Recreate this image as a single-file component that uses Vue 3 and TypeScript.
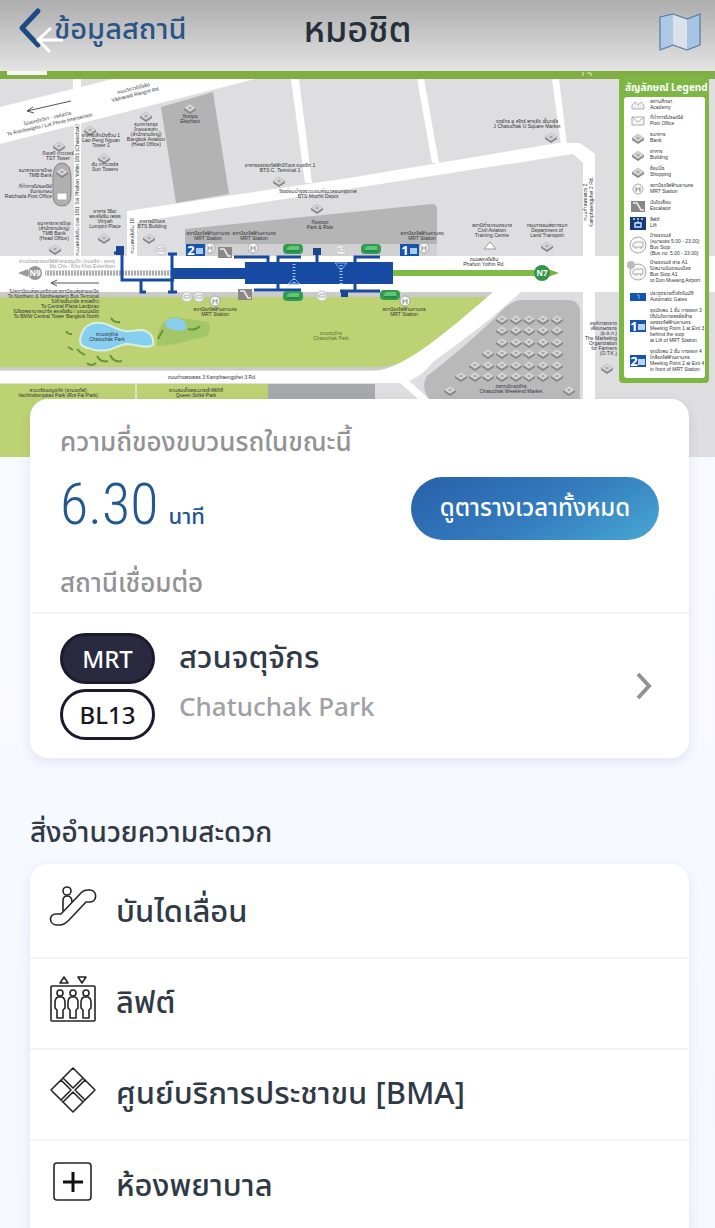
<script setup lang="ts">
interface MapLabel {
  x: number
  y: number
  lines: string[]
  anchor?: 'start' | 'middle' | 'end'
  tone?: string
}

interface Facility {
  id: 'escalator' | 'lift' | 'bma' | 'aid'
  name: string
}

const labels: MapLabel[] = [
  { x: 58, y: 155, lines: ['ทีเอสที ทาวเวอร์', 'TST Tower'] },
  { x: 52, y: 172, lines: ['ธนาคารทหารไทย', 'TMB Bank'], anchor: 'end' },
  { x: 52, y: 188, lines: ['ที่ทำการไปรษณีย์', 'จันทรเกษม', 'Ratchada Post Office'], anchor: 'end' },
  { x: 54, y: 225, lines: ['ธนาคารทหารไทย', '(สำนักงานใหญ่)', 'TMB Bank', '(Head Office)'] },
  { x: 101, y: 137, lines: ['อาคารเล้าเป้งง้วน 1', 'Lao Peng Nguan', 'Tower 1'] },
  { x: 105, y: 166, lines: ['ซัน ทาวเวอร์ส', 'Sun Towers'] },
  { x: 105, y: 213, lines: ['อาคาร วิริยะ', 'พหลโยธิน เพลส', 'Viriyah', 'Lumpini Place'] },
  { x: 152, y: 223, lines: ['อาคารบีทีเอส', 'BTS Building'] },
  { x: 146, y: 126, lines: ['ธนาคารกรุง', 'ไทยแอสเสท', '(สำนักงานใหญ่)', 'Bangkok Aviation', '(Head Office)'] },
  { x: 190, y: 118, lines: ['วัดอรุณ', 'Elephant'] },
  { x: 280, y: 167, lines: ['อาคารจอดรถไฟฟ้าบีทีเอส หมอชิต 1', 'BTS C. Terminal 1'] },
  { x: 318, y: 193, lines: ['โรงซ่อมบำรุงระบบขนส่งมวลชนกรุงเทพ', 'BTS Mochit Depot'] },
  { x: 320, y: 224, lines: ['ที่จอดรถ', 'Park & Ride'] },
  { x: 208, y: 235, lines: ['สถานีรถไฟฟ้ามหานคร', 'MRT Station'] },
  { x: 254, y: 235, lines: ['สถานีรถไฟฟ้ามหานคร', 'MRT Station'] },
  { x: 422, y: 235, lines: ['สถานีรถไฟฟ้ามหานคร', 'MRT Station'] },
  { x: 492, y: 227, lines: ['สถานีตำรวจนครบาล', 'Civil Aviation', 'Training Centre'] },
  { x: 547, y: 227, lines: ['กรมการขนส่งทางบก', 'Department of', 'Land Transport'] },
  { x: 527, y: 123, lines: ['จตุจักร ยู สโตร์ พาหุรัด เซ็นทรัล', 'J Chatuchak U Square Market'] },
  { x: 484, y: 261, lines: ['ถนนพหลโยธิน', 'Phahon Yothin Rd.'] },
  { x: 115, y: 263, lines: ['ส่วนต่อขยายรถไฟฟ้าสายสุขุมวิท (หมอชิต - คูคต)', 'Mo Chit - Khu Khot Extension'], anchor: 'end', tone: '#98989c' },
  {
    x: 99,
    y: 293,
    lines: [
      'ไปสถานีขนส่งหมอชิตและสถานีขนส่งสายเหนือ',
      'To Northern & Northeastern Bus Terminal',
      'ไปห้างเซ็นทรัล ลาดพร้าว',
      'To Central Plaza Lardprao',
      'ไปโรงพยาบาลเปาโล พหลโยธิน / แดนเนรมิต',
      'To BMW Central Tower Bangkok North',
    ],
    anchor: 'end',
  },
  { x: 215, y: 311, lines: ['สถานีรถไฟฟ้ามหานคร', 'MRT Station'] },
  { x: 404, y: 311, lines: ['สถานีรถไฟฟ้ามหานคร', 'MRT Station'] },
  { x: 107, y: 336, lines: ['สวนจตุจักร', 'Chatuchak Park'] },
  { x: 331, y: 335, lines: ['สวนจตุจักร', 'Chatuchak Park'], tone: '#637232' },
  { x: 212, y: 379, lines: ['ถนนกำแพงเพชร 3 Kamphaengphet 3 Rd.'] },
  { x: 58, y: 392, lines: ['สวนวชิรเบญจทัศ (สวนรถไฟ)', 'Vachirabenjatas Park (Rot Fai Park)'] },
  { x: 196, y: 392, lines: ['สวนสมเด็จพระนางเจ้าสิริกิติ์', 'Queen Sirikit Park'] },
  { x: 511, y: 388, lines: ['ตลาดนัดจตุจักร', 'Chatuchak Weekend Market'] },
  {
    x: 617,
    y: 325,
    lines: ['องค์การตลาด', 'เพื่อเกษตรกร', '(อ.ต.ก.)', 'The Marketing', 'Organization', 'for Farmers', '(O.T.K.)'],
    anchor: 'end',
  },
]

const pins: [number, number][] = [
  [59, 146], [90, 130], [104, 158], [146, 116], [190, 108], [279, 181], [317, 208],
  [551, 137], [104, 238], [149, 238], [55, 249], [547, 246], [607, 368], [450, 390], [569, 390],
]

const marketRows: { y: number; xs: number[] }[] = [
  { y: 319, xs: [502, 516, 529, 543, 557] },
  { y: 330, xs: [502, 516, 529, 543, 557] },
  { y: 342, xs: [502, 516, 529, 543, 557] },
  { y: 353, xs: [488, 502, 516, 529, 543, 557] },
  { y: 365, xs: [475, 488, 502, 516, 529, 543, 557] },
  { y: 376, xs: [461, 475, 488, 502, 516, 529, 543, 557] },
]

const stops: [number, number][] = [[161, 250], [341, 250], [187, 297], [199, 297], [322, 296]]
const metro: [number, number][] = [[210, 248], [253, 248], [215, 301], [424, 248], [405, 301]]
const exits: [number, number][] = [[293, 244], [293, 291], [371, 244], [390, 290]]

const legend: { y: number; kind: string; lines: string[] }[] = [
  { y: 105, kind: 'school', lines: ['สถานศึกษา', 'Academy'] },
  { y: 121, kind: 'post', lines: ['ที่ทำการไปรษณีย์', 'Post Office'] },
  { y: 138, kind: 'pin', lines: ['ธนาคาร', 'Bank'] },
  { y: 155, kind: 'pin', lines: ['อาคาร', 'Building'] },
  { y: 172, kind: 'pin', lines: ['ช้อปปิ้ง', 'Shopping'] },
  { y: 189, kind: 'metro', lines: ['สถานีรถไฟฟ้ามหานคร', 'MRT Station'] },
  { y: 206, kind: 'escalator', lines: ['บันไดเลื่อน', 'Escalator'] },
  { y: 223, kind: 'lift', lines: ['ลิฟต์', 'Lift'] },
  { y: 245, kind: 'bus', lines: ['ป้ายรถเมล์', '(หมายเลข 5.00 - 23.00)', 'Bus Stop', '(Bus no. 5.00 - 23.00)'] },
  { y: 272, kind: 'bus', lines: ['ป้ายรถเมล์ สาย A1', 'ไปสนามบินดอนเมือง', 'Bus Stop A1', 'to Don Mueang Airport'] },
  { y: 297, kind: 'ticket', lines: ['ประตูตรวจตั๋วอัตโนมัติ', 'Automatic Gates'] },
  { y: 326, kind: '1', lines: ['จุดนัดพบ 1 ชั้น ทางออก 3', 'ใต้บันไดทางลงฝั่งซ้าย', 'ของรถไฟฟ้ามหานคร', 'Meeting Point 1 at Exit 3', 'behind the stop', 'at Lift of MRT Station'] },
  { y: 361, kind: '2', lines: ['จุดนัดพบ 2 ชั้น ทางออก 4', 'ใกล้รถไฟฟ้ามหานคร', 'Meeting Point 2 at Exit 4', 'in front of MRT Station'] },
]

const facilities: Facility[] = [
  { id: 'escalator', name: 'บันไดเลื่อน' },
  { id: 'lift', name: 'ลิฟต์' },
  { id: 'bma', name: 'ศูนย์บริการประชาขน [BMA]' },
  { id: 'aid', name: 'ห้องพยาบาล' },
]
</script>

<template>
  <div class="page">
    <header class="bar">
      <button class="back" type="button">
        <svg class="back-icon" viewBox="0 0 28 42" aria-hidden="true">
          <path d="M24 4 8 21 24 38" fill="none" stroke="#1c4a83" stroke-width="5" stroke-linecap="round" stroke-linejoin="round" />
        </svg>
        <span>ข้อมูลสถานี</span>
      </button>
      <button class="viewer-back" type="button" aria-label="ย้อนกลับ">
        <svg viewBox="0 0 28 28" aria-hidden="true">
          <path d="M15 2 2 14 14 26M3 14H27" fill="none" stroke="#fff" stroke-width="3" />
        </svg>
      </button>
      <h1>หมอชิต</h1>
      <button class="map-button" type="button" aria-label="แผนที่">
        <svg viewBox="0 0 42 38" aria-hidden="true">
          <path d="M1 4 14 1V32L1 37Z" fill="#adc9e6" />
          <path d="M14 1 28 6V37L14 32Z" fill="#dbe1e8" />
          <path d="M28 6 41 1V32L28 37Z" fill="#a6c4e3" />
          <path d="M1 4 14 1 28 6 41 1V32L28 37 14 32 1 37Z" fill="none" stroke="#55799f" stroke-width="1.2" stroke-linejoin="round" />
        </svg>
      </button>
    </header>

    <main>
      <svg class="station-map" viewBox="0 71 715 386" role="img" aria-label="แผนที่สถานีหมอชิต">
        <defs>
          <g id="pin">
            <path d="M-6 0 0-4 6 0 0 4Z" fill="#d4d4d5" stroke="#b9b9b9" stroke-width=".6" />
            <path d="M-6 0V2L0 6 6 2V0L0 4Z" fill="#858587" />
            <path d="M-2 0 0-1 2 0 0 1Z" fill="#999" />
          </g>
          <g id="metro">
            <circle r="5" fill="#f5f5f5" stroke="#999" stroke-width=".8" />
            <path d="M-2 3V-2M2-2V3M-2 0H2" fill="none" stroke="#777" stroke-width=".8" />
          </g>
          <g id="bus">
            <circle r="5" fill="#f0f0f1" stroke="#bbb" stroke-width=".8" />
            <path d="M-3 1V-1L0-2H3V1Z" fill="none" stroke="#aaa" stroke-width=".8" />
          </g>
          <g id="escalator">
            <rect x="-7" y="-5" width="14" height="11" fill="#8a8784" />
            <path d="M-5-3H-1L3 4H6" fill="none" stroke="#eee" stroke-width="1.6" />
          </g>
          <g id="exit">
            <rect x="-10" y="0" width="20" height="10" rx="4" fill="#359b52" />
            <path d="M-6 6V4L-3 2H6V6Z" fill="#62c477" />
            <path d="M-6 7H6" stroke="#16743b" stroke-width="1" />
          </g>
        </defs>

        <rect y="70" width="715" height="387" fill="#dedddf" />
        <path d="M161 107 213 92 229 194 176 203Z" fill="#b3b3b4" />
        <path d="M185 229 432 204Q437 204 437 209V244H185Z" fill="#b5b5b6" />
        <path d="M185 244H437V256H185Z" fill="#d1d1d2" />
        <g fill="#fff">
          <path d="M0 107 113 79H255L0 144Z" />
          <path d="M73 79H81V100H73ZM74 120H81V256H74Z" />
          <path d="M291 79H299L312 183H305Z" />
          <path d="M417 79H424L439 163H432Z" />
          <path d="M552 79H559L567 145H561Z" />
          <path d="M127 211 355 177 558 143H580L595 154V400H583V163L573 154 355 188 137 222V256H127Z" />
          <rect y="256" width="619" height="36" />
          <rect x="707" y="256" width="8" height="36" />
        </g>

        <path d="M0 292H492V297H0Z" fill="#cbcbcd" />
        <path d="M0 296H491C464 324 431 349 405 362Q397 367 383 370H0Z" fill="#cacbc8" />
        <path d="M0 297H488C455 330 424 352 401 362Q391 367 370 367H0Z" fill="#bdd273" />
        <path d="M0 371H373C405 370 452 327 493 292H521C478 331 451 348 432 363 424 373 414 381 400 383H0Z" fill="#fff" />
        <path d="M398 381 405 377 430 400H419Z" fill="#fff" />
        <path d="M0 384H268V400H50V457H0Z" fill="#bdd273" />
        <path d="M268 384H375V400H268Z" fill="#a8a9ac" />
        <path d="M136 383V399" stroke="#dbe7b4" stroke-width="2" />
        <path d="M519 300H567Q580 300 580 312V400H430Q420 387 427 376Q459 352 495 318 507 303 519 300Z" fill="#b9b9ba" />

        <rect y="71" width="715" height="8" fill="#80ae43" />
        <rect x="7" y="71" width="40" height="4" fill="#f4f7f0" />
        <path d="M583 72V76M587 73H591V76" fill="none" stroke="#dfeecd" />

        <path d="M45 273H172" stroke="#aaaaad" stroke-width="5" />
        <path d="M46 273H172" stroke="#f8f8f8" stroke-width="5" stroke-dasharray="1 2" />
        <path d="M18 273 28 269V277Z" fill="#9a9a9d" />
        <circle cx="35" cy="273" r="7" fill="#98989c" />
        <path d="M393 273H536" stroke="#80bb43" stroke-width="6" />
        <path d="M548 269 559 273 548 277Z" fill="#80ad48" />
        <circle cx="542" cy="273" r="8" fill="#35944b" />
        <text x="35" y="276" class="node">N9</text>
        <text x="542" y="276" class="node">N7</text>

        <path d="M172 268H245V262H393V284H245V279H172Z" fill="#164aa3" />
        <path
          d="M114 253H122V280H174M141 280V292H146M168 254H177M172 254V292M168 292H177M234 257H268V265M301 257H278V265M278 282V290M254 290H301M355 264V257H380M355 282V291H340M355 291H380M317 250V262"
          fill="none" stroke="#164aa3" stroke-width="3"
        />
        <path d="M116 246H124V255H116ZM313 248H321V255H313ZM341 291H348V297H341Z" fill="#1b468e" />
        <path d="M294 264V284M341 265V284" stroke="#9cc6ff" stroke-width="3" stroke-dasharray="1 2" />
        <path d="M288 284 294 278 300 284ZM335 263 341 270 347 263Z" fill="none" stroke="#83adf0" />

        <path d="M80 340C83 321 98 320 111 326S127 332 139 330C150 330 154 337 153 345 147 349 138 345 127 344 119 344 111 353 95 350 85 347 80 347 80 340Z" fill="#86cff1" stroke="#d9f0df" stroke-width="2" />
        <path d="M157 339C158 328 164 317 175 317L208 322Q214 333 202 338C190 339 181 345 157 346Z" fill="#a3c668" />
        <path d="M165 322Q175 313 186 323 188 330 180 331L167 328Z" fill="#8bcdee" />
        <g fill="none" stroke="#63963d" stroke-width="2">
          <path d="M111 318Q114 323 120 322M66 331Q67 334 72 334M68 347 73 350M77 349Q80 353 85 355M87 363Q91 367 96 363M97 356Q101 363 108 361M110 355Q114 363 122 361M158 339 163 330M188 329Q195 331 200 326" />
        </g>
        <path d="M53 178Q53 163 62 163T71 178V195Q71 206 62 206T53 195Z" fill="#b0b0b1" stroke="#858588" />
        <use href="#pin" x="62" y="172" />
        <rect x="57" y="193" width="10" height="7" fill="#fff" stroke="#a5a5a5" />
        <path d="M27 111 71 101M27 111 33 107M27 111 34 113M51 283H99M51 283 57 280M51 283 57 286" fill="none" stroke="#555" stroke-width="1" />

        <use v-for="[x, y] in pins" :key="`p${x}-${y}`" href="#pin" :x="x" :y="y" />
        <template v-for="row in marketRows" :key="row.y">
          <use v-for="x in row.xs" :key="x" href="#pin" :x="x" :y="row.y" />
        </template>
        <use v-for="[x, y] in stops" :key="`b${x}`" href="#bus" :x="x" :y="y" />
        <use v-for="[x, y] in metro" :key="`m${x}`" href="#metro" :x="x" :y="y" />
        <use v-for="[x, y] in exits" :key="`e${x}-${y}`" href="#exit" :x="x" :y="y" />
        <use href="#escalator" x="225" y="252" />
        <use href="#escalator" x="245" y="294" />
        <path d="M484 249 490 242 496 249Z" fill="#fff" stroke="#999" />
        <g>
          <rect x="186" y="244" width="19" height="12" fill="#1655ab" />
          <rect x="400" y="244" width="19" height="12" fill="#1655ab" />
          <rect x="196" y="248" width="7" height="6" fill="#a9ccf5" />
          <rect x="410" y="248" width="7" height="6" fill="#a9ccf5" />
          <text x="191" y="255" class="point">2</text>
          <text x="405" y="255" class="point">1</text>
        </g>

        <text
          v-for="label in labels" :key="`${label.x}-${label.y}`" class="label"
          :text-anchor="label.anchor ?? 'middle'" :fill="label.tone ?? '#353538'"
        >
          <tspan v-for="(line, i) in label.lines" :key="i" :x="label.x" :y="label.y + i * 5">{{ line }}</tspan>
        </text>
        <g class="label" fill="#353538" text-anchor="middle">
          <text transform="translate(48 120) rotate(-13)">ไปแยกรัชวิภา - วงศ์สว่าง</text>
          <text transform="translate(50 126) rotate(-13)">To Ratchavipha / Lat Phrao Intersection</text>
          <text transform="translate(134 90) rotate(-14)">ถนนวิภาวดีรังสิต</text>
          <text transform="translate(136 96) rotate(-14)">Vibhavadi Rangsit Rd.</text>
          <text transform="translate(79 190) rotate(-90)">ถนนพหลโยธิน ซอย 18/1 Soi Phahon Yothin 18/1 (Chatuchak)</text>
          <text transform="translate(134 236) rotate(-90)">ถนนพหลโยธิน 18</text>
          <text transform="translate(587 202) rotate(-90)">ถนนกำแพงเพชร 2</text>
          <text transform="translate(593 202) rotate(-90)">Kamphaengphet 2 Rd.</text>
        </g>

        <rect x="619" y="77" width="90" height="306" rx="4" fill="#7db642" />
        <rect x="624" y="97" width="81" height="281" rx="3" fill="#fff" />
        <text x="625" y="91" class="legend-title">สัญลักษณ์</text>
        <text x="671" y="91" class="legend-title">Legend</text>
        <g v-for="item in legend" :key="item.y">
          <use v-if="item.kind === 'pin'" href="#pin" x="638" :y="item.y" />
          <use v-else-if="item.kind === 'metro'" href="#metro" x="638" :y="item.y" />
          <use v-else-if="item.kind === 'escalator'" href="#escalator" x="638" :y="item.y" />
          <g v-else :transform="`translate(638 ${item.y})`">
            <path v-if="item.kind === 'school'" d="M-6 4V0L-3-3 0 0 3-3 6 0V4Z" fill="#eee" stroke="#b2b2b2" />
            <path v-else-if="item.kind === 'post'" d="M-6-4H6V4H-6ZL0 1 6-4" fill="#f6f6f6" stroke="#aaa" />
            <template v-else-if="item.kind === 'lift'">
              <rect x="-8" y="-6" width="16" height="13" fill="#163b79" />
              <path d="M-5-4H-3M-1-4H1M3-4H5M-3 4V0H3V4ZM0 0V-2" fill="none" stroke="#cce4ff" stroke-width="1.4" />
            </template>
            <template v-else-if="item.kind === 'bus'">
              <circle r="8" fill="#fafafa" stroke="#aaa5af" />
              <path d="M-5 2V-1L-2-3H5V2ZM-3 3H-1M2 3H4" fill="none" stroke="#aaa" />
              <circle v-if="item.y === 272" cx="-7" cy="-7" r="4" fill="#bbb" />
            </template>
            <g v-else>
              <rect x="-8" :y="item.kind === 'ticket' ? -4 : -6" width="16" :height="item.kind === 'ticket' ? 8 : 12" fill="#1555ae" />
              <path v-if="item.kind === 'ticket'" d="M-1-2H1V2" fill="none" stroke="#80adf0" />
              <template v-else>
                <rect x="0" y="-2" width="7" height="6" fill="#b9d5f6" />
                <text x="-4" y="5" class="point">{{ item.kind }}</text>
              </template>
            </g>
          </g>
          <text class="label" fill="#353538">
            <tspan v-for="(line, i) in item.lines" :key="i" x="650" :y="item.y + (i * 2 - item.lines.length + 1) * 3 + 1">{{ line }}</tspan>
          </text>
        </g>
      </svg>

      <section class="card timing">
        <div class="frequency">
          <h2>ความถี่ของขบวนรถในขณะนี้</h2>
          <div class="frequency-row">
            <p class="minutes"><strong>6.30</strong><span>นาที</span></p>
            <button class="timetable" type="button">ดูตารางเวลาทั้งหมด</button>
          </div>
          <h2>สถานีเชื่อมต่อ</h2>
        </div>
        <a class="connection" href="#chatuchak-park">
          <span class="badges">
            <span class="badge filled">MRT</span>
            <span class="badge">BL13</span>
          </span>
          <span class="names">
            <span class="thai">สวนจตุจักร</span>
            <span class="latin">Chatuchak Park</span>
          </span>
          <svg class="chevron" viewBox="0 0 18 28" aria-hidden="true">
            <path d="M3 2 14 14 3 26" fill="none" stroke="#929295" stroke-width="4" />
          </svg>
        </a>
      </section>

      <h2 class="section-title">สิ่งอำนวยความสะดวก</h2>
      <ul class="card facilities">
        <li v-for="facility in facilities" :key="facility.id">
          <svg viewBox="0 0 48 48" aria-hidden="true">
            <g fill="none" stroke="#252525" stroke-width="1.6" stroke-linejoin="round">
              <template v-if="facility.id === 'escalator'">
                <circle cx="18" cy="7" r="4" />
                <path d="M14 27V17Q14 12 18 12 23 12 23 18" />
                <path d="M7 30H12L31 10Q34 6 39 6H41C49 7 48 18 41 18H37L20 36Q15 41 11 41H8C0 41-1 30 7 30Z" />
              </template>
              <template v-else-if="facility.id === 'lift'">
                <rect x="2" y="11" width="44" height="35" rx="1" />
                <path d="M11 8 15 2 19 8ZM29 2H37L33 8Z" />
                <g v-for="x in [11, 24, 37]" :key="x" :transform="`translate(${x} 0)`">
                  <circle cy="18" r="3" />
                  <path d="M-2 22Q-5 23-5 28V33L-3 35V43H3V35L5 33V28Q5 23 2 22Z" />
                </g>
              </template>
              <path v-else-if="facility.id === 'bma'" d="M24 2 34 12 24 22 14 12ZM12 14 22 24 12 34 2 24ZM36 14 46 24 36 34 26 24ZM24 26 34 36 24 46 14 36ZM12 14 14 12M34 12 36 14M36 34 34 36M14 36 12 34" />
              <template v-else>
                <rect x="5" y="5" width="37" height="37" rx="3" />
                <path d="M24 14V34M14 24H34" stroke="#111" stroke-width="3" />
              </template>
            </g>
          </svg>
          <span>{{ facility.name }}</span>
        </li>
      </ul>
    </main>
  </div>
</template>

<style scoped>
.page {
  min-height: 100vh;
  background: linear-gradient(#fafaff, #f6f9ff 65%, #f7f7fe);
  color: #303a46;
  font-family: "Noto Sans", "Noto Sans Thai", sans-serif;
}
h1, h2, p, ul { margin: 0; padding: 0; font-weight: 500; }
button { border: 0; padding: 0; font: inherit; background: none; }
.bar {
  position: relative;
  display: grid;
  grid-template-columns: 1fr auto 1fr;
  align-items: center;
  height: 71px;
  padding: 0 14px;
  box-sizing: border-box;
  background: linear-gradient(#adadad, #c8c8c8 50%, #e4e4e4);
}
.back {
  display: flex;
  align-items: center;
  justify-self: start;
  gap: 12px;
  padding-bottom: 16px;
  color: #2b5587;
  font-size: 29px;
  font-weight: 500;
  line-height: 40px;
  white-space: nowrap;
}
.back-icon { width: 28px; height: 42px; }
.viewer-back { position: absolute; left: 36px; top: 26px; width: 28px; height: 28px; }
.viewer-back svg { display: block; width: 100%; }
h1 { color: #26303b; font-size: 36px; padding-bottom: 14px; line-height: 48px; }
.map-button { justify-self: end; width: 42px; padding-bottom: 8px; }
.map-button svg { display: block; width: 100%; }
.station-map { display: block; width: 100%; }
.node { fill: #fff; font-size: 8px; font-weight: 700; text-anchor: middle; }
.point { fill: #fff; font-size: 13px; font-weight: 700; text-anchor: middle; }
.label { font-family: "Liberation Sans", "Noto Sans Thai", sans-serif; font-size: 5px; }
.legend-title { fill: #fff; font-size: 10px; font-weight: 700; }
.card {
  margin: 0 26px 0 30px;
  background: #fff;
  border-radius: 18px;
  box-shadow: 0 4px 12px rgb(75 85 145 / 12%);
}
.timing { position: relative; margin-top: -58px; overflow: hidden; }
.frequency { padding: 24px 30px 12px; border-bottom: 2px solid #f4f4f6; }
.frequency h2 { color: #929297; font-size: 26px; line-height: 36px; }
.frequency-row { display: flex; align-items: center; justify-content: space-between; height: 99px; margin-bottom: 6px; }
.minutes { display: flex; align-items: baseline; gap: 10px; padding-bottom: 10px; color: #20588f; }
.minutes strong { font-family: "Roboto Condensed", Roboto, sans-serif; font-size: 58px; font-weight: 300; line-height: 72px; }
.minutes span { font-size: 22px; }
.timetable {
  width: 248px;
  height: 63px;
  border-radius: 32px;
  background: linear-gradient(150deg, #285faa, #347ebf 55%, #48a8d3);
  color: #fff;
  font-size: 24px;
  font-weight: 500;
}
.connection { display: flex; align-items: center; height: 144px; padding: 0 36px 0 30px; color: inherit; text-decoration: none; }
.badges { display: grid; gap: 5px; }
.badge {
  display: grid;
  place-items: center;
  box-sizing: border-box;
  width: 95px;
  height: 51px;
  border: 3px solid #1c1a2b;
  border-radius: 26px;
  color: #181822;
  font-size: 24px;
  font-weight: 500;
}
.filled { background: #292940; color: #fff; }
.names { display: grid; gap: 14px; margin-left: 24px; padding-bottom: 10px; font-weight: 500; line-height: 36px; }
.thai { font-size: 31px; }
.latin { color: #a0a1a5; font-size: 26px; }
.chevron { width: 18px; height: 28px; margin-left: auto; }
.section-title { margin: 54px 30px 14px; font-size: 28px; line-height: 38px; }
.facilities { padding-top: 4px; border-radius: 18px 18px 0 0; list-style: none; }
.facilities li {
  display: flex;
  align-items: center;
  gap: 19px;
  height: 91px;
  padding: 0 19px;
  box-sizing: border-box;
  border-bottom: 2px solid #f3f3f6;
  font-size: 31px;
  font-weight: 500;
}
.facilities li:last-child { border-bottom: 0; }
.facilities svg { width: 48px; height: 48px; padding-bottom: 10px; }
</style>

<style>
html { scrollbar-width: none; }
body { margin: 0; }
</style>
